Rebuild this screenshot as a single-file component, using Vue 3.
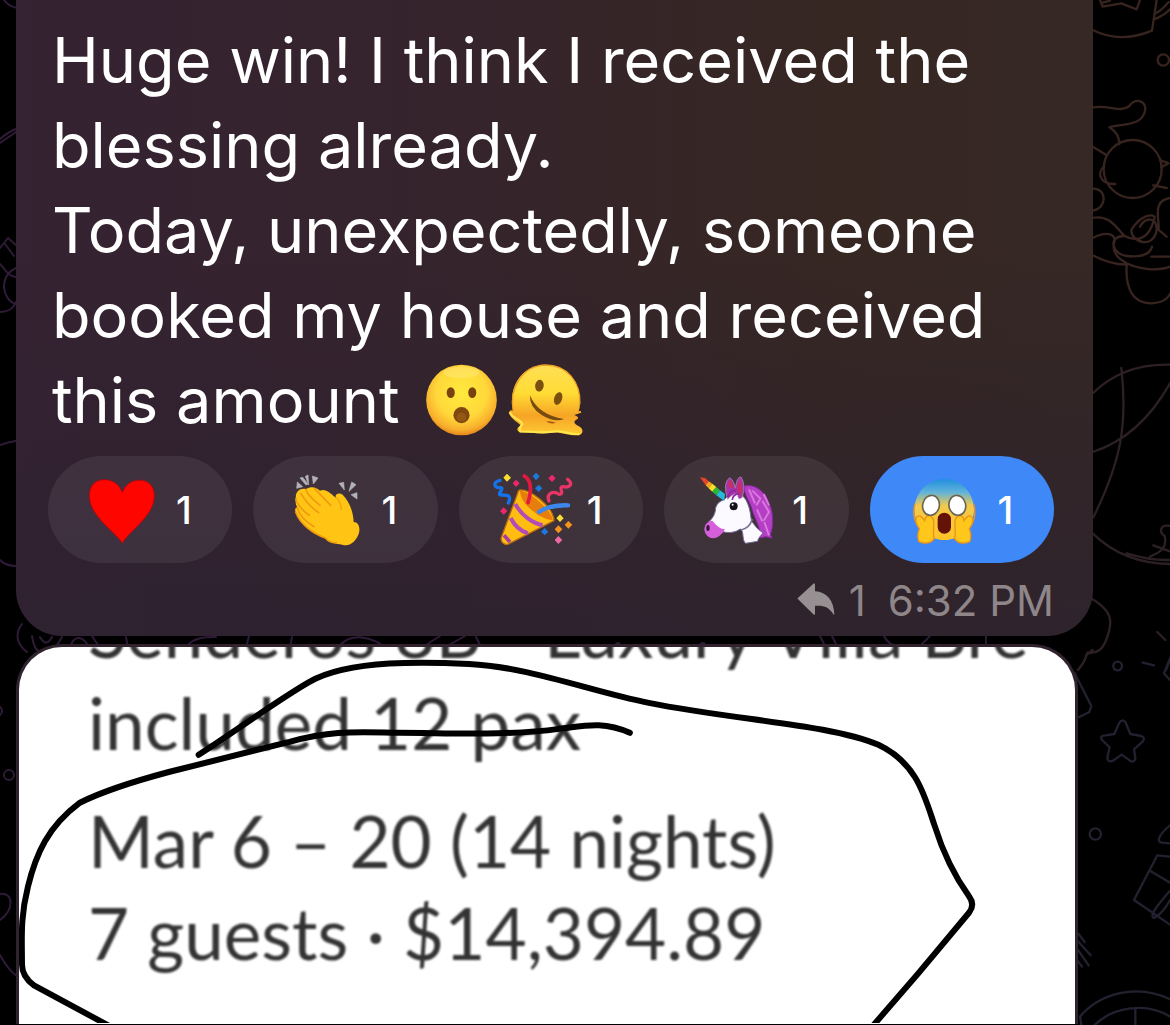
<script setup>
import { ref } from 'vue'

const message = `Huge win! I think I received the blessing already.
Today, unexpectedly, someone booked my house and received this amount `

const reactions = ref([
  { id: 'heart', label: 'Heart', count: 1, viewBox: '125 88 240 240', mine: false },
  { id: 'clap', label: 'Clapping hands', count: 1, viewBox: '743 88 240 240', mine: false },
  { id: 'party', label: 'Party popper', count: 1, viewBox: '159 88 240 240', mine: false },
  { id: 'unicorn', label: 'Unicorn', count: 1, viewBox: '777 88 240 240', mine: false },
  { id: 'scream', label: 'Screaming face', count: 1, viewBox: '372 88 240 240', mine: true }
])

function toggle(reaction) {
  reaction.mine = !reaction.mine
}
</script>

<template>
  <main class="chat">
    <!-- doodle wallpaper -->
    <svg class="wallpaper" viewBox="0 0 1170 1025" preserveAspectRatio="xMidYMid slice" aria-hidden="true">
      <g class="warm" transform="translate(1060 0) scale(.3333)">
        <path d="M120 0L128 20L184 10L230 28L240 0M128 8L150 2M98 90Q180 132 276 92L290 0M282 58Q310 48 330 28M286 40Q300 36 326 6" />
        <circle cx="310" cy="180" r="17" />
        <path d="M98 322C150 314 180 340 208 318C226 292 256 302 256 328C248 380 190 370 148 382Q178 400 178 432" />
        <circle cx="218" cy="507" r="87" />
        <path d="M98 440L138 464M132 500C112 516 116 554 166 552M300 480L326 490L304 502M280 556L320 564M98 566C142 564 142 626 98 632" />
        <path d="M98 654C152 642 176 694 194 708C224 724 268 726 284 650C262 636 230 664 214 690C212 726 280 750 290 690C292 650 256 650 240 680M98 714C140 692 164 702 164 722C150 760 184 800 270 808Q310 808 330 800M194 708C140 708 158 764 200 768C240 772 270 764 276 740M98 766Q150 794 200 794M274 770L330 770M330 594C276 602 298 656 296 690L320 710" />
        <path d="M200 794C196 860 214 910 275 910Q318 908 330 882" />
      </g>
      <g class="dusk" transform="translate(1060 320) scale(.3333)">
        <path d="M98 220Q190 130 330 134M98 396Q240 350 330 190M184 144C204 320 180 430 100 592M98 640Q190 730 330 732M200 700Q270 722 330 720" />
        <path d="M330 618C300 612 296 636 314 648C324 690 290 700 270 710M280 676L330 694M86 830C156 870 164 900 136 966Q120 1004 82 998Q76 1024 54 1050M98 990L78 1006" />
        <path d="M292 936L316 960M330 1020L318 1050" />
      </g>
      <g class="cool" transform="translate(1060 640) scale(.3333)">
        <circle cx="173" cy="78" r="13" />
        <path d="M248 68L282 76M330 55L312 100L330 120M44 100L94 198L88 216L56 232" />
        <path d="M178 248Q188 234 197 248L211 282L244 288Q258 294 247 306L222 328L226 354Q224 370 210 362L185 344L158 363Q142 368 142 352L149 322L126 300Q118 286 136 286L163 282Z" />
        <circle cx="106" cy="582" r="17" />
        <path d="M330 556C304 578 284 604 306 608L330 610M292 646L330 650M292 646L222 780L330 854M270 692L330 728M330 752C300 788 264 828 282 834C300 826 320 800 330 780" />
        <path d="M54 880L74 906M54 904L92 946M54 930L86 976M54 964L66 980M60 1130C120 1060 230 1030 330 1078M60 1130L64 1155M104 1155C160 1100 260 1086 330 1130M226 1104V1155" />
      </g>
      <g class="violet">
        <path d="M4 0Q8 6 17 8M0 143L16 132M0 139Q8 132 16 129M8 238L17 246M8 238L0 248M5 244L14 256M0 264C6 270 8 276 16 277M16 268C-2 276 2 300 16 304M0 312Q12 312 16 302M0 445Q8 442 16 441M0 560Q6 566 16 566" />
        <circle cx="9" cy="775" r="5" />
        <circle cx="-3" cy="711" r="5" />
        <path d="M0 894C14 892 14 910 0 920M0 955Q8 970 17 976" />
        <path d="M22 624C13 636 19 646 27 652M32 636Q34 650 40 652M40 637Q46 648 52 637M62 637L54 650M70 650C72 632 86 636 90 650M92 636L100 648M126 637L128 648M186 647Q194 636 216 637M249 636L246 648M292 637L290 648M338 648C350 630 374 638 386 648M418 650L440 636M440 650L465 636M476 637L482 649M614 648Q618 638 622 648M664 648Q668 642 674 648M698 648Q702 638 708 648M820 636L826 648M832 636L838 648M884 636Q890 648 908 648M918 648L930 636M986 636V648" />
      </g>
    </svg>

    <article class="bubble">
      <p class="message">{{ message }}<svg class="emoji-inline face" viewBox="80 40 216 220" role="img" aria-label="Face with open mouth">
          <defs>
            <radialGradient id="face-fill" cx=".5" cy=".4" r=".6">
              <stop offset="0" stop-color="#ffea3d" />
              <stop offset=".6" stop-color="#ffd83a" />
              <stop offset=".88" stop-color="#f8ae2c" />
              <stop offset="1" stop-color="#e3861a" />
            </radialGradient>
          </defs>
          <circle cx="188" cy="150" r="105" fill="url(#face-fill)" />
          <ellipse cx="188" cy="68" rx="54" ry="17" fill="#ffee86" opacity=".4" />
          <ellipse cx="156" cy="128" rx="12" ry="16" fill="#79430f" />
          <ellipse cx="220" cy="128" rx="12" ry="16" fill="#79430f" />
          <circle cx="188" cy="195" r="24" fill="#80480f" />
          <ellipse cx="188" cy="201" rx="14" ry="13" fill="#955714" />
        </svg><svg class="emoji-inline melting" viewBox="330 40 228 225" role="img" aria-label="Melting face">
          <defs>
            <linearGradient id="melt-fill" x1="0" y1="0" x2="0" y2="1">
              <stop offset="0" stop-color="#ffdf55" />
              <stop offset=".4" stop-color="#ffdc34" />
              <stop offset=".72" stop-color="#f6a425" />
              <stop offset="1" stop-color="#ffcd35" />
            </linearGradient>
          </defs>
          <path d="M344 185C328 106 376 46 443 46C508 46 550 98 547 165Q547 180 543 187Q552 184 551 191L530 198Q546 204 540 210C524 216 530 226 544 232C562 240 556 262 538 260C508 260 486 248 462 252C430 258 390 250 366 251C350 246 358 232 368 230C360 222 328 204 333 187Q337 181 344 185Z" fill="url(#melt-fill)" />
          <path d="M344 185C332 118 370 48 443 46C509 46 550 99 547 165" fill="none" stroke="#ef9f23" stroke-width="4" />
          <path d="M333 190C346 214 366 208 372 226Q362 238 366 248C410 248 440 254 470 248C498 244 520 259 545 256" fill="none" stroke="#ffe84d" stroke-width="6" />
          <ellipse cx="424" cy="109" rx="13" ry="18" transform="rotate(8 424 109)" fill="#79500f" />
          <ellipse cx="481" cy="148" rx="12" ry="20" transform="rotate(18 481 148)" fill="#79500f" />
          <path d="M395 138Q420 198 499 210Q470 222 431 198Q394 176 395 138Z" fill="#774b10" />
          <path d="M444 218Q460 215 474 222Q460 227 444 218Z" fill="#a4580d" />
        </svg>
      </p>

      <div class="reactions">
        <button
          v-for="reaction in reactions"
          :key="reaction.id"
          type="button"
          class="reaction"
          :class="{ mine: reaction.mine }"
          :aria-label="`${reaction.label} ${reaction.count}`"
          :aria-pressed="reaction.mine"
          @click="toggle(reaction)"
        >
          <svg class="reaction-icon" :viewBox="reaction.viewBox" aria-hidden="true">
            <path v-if="reaction.id === 'heart'" d="M246 308C234 284 166 238 151 190C138 142 160 118 190 117C218 116 238 132 246 155C256 130 276 116 304 119C336 122 350 154 338 191C322 240 258 280 246 308Z" fill="#ff0500" stroke="#a60b12" stroke-width="3" />

            <g v-else-if="reaction.id === 'clap'">
              <path d="M798 107L806 103L808 133ZM782 112L790 110L806 130L800 133ZM819 106L836 112L822 130ZM774 124L790 138L772 143ZM899 128L913 125L915 148ZM937 124L950 132L929 152ZM935 162L953 156V175Z" fill="#b3b2b8" stroke="#b3b2b8" stroke-width="2" />
              <path d="M770 174C766 154 782 140 800 145C814 136 830 138 842 150C856 144 868 152 890 172C884 160 900 154 910 162C930 182 942 214 943 244C958 244 964 262 958 280C950 302 930 320 909 312C888 308 874 310 856 292C820 278 780 250 769 214Q764 202 774 200Q766 188 770 174Z" fill="#ffc414" />
              <path d="M770 174C768 186 796 216 810 224M774 202C780 222 800 244 824 258M800 148C806 166 826 180 842 194M784 158C798 180 820 204 838 216M826 144L874 194M769 214C782 250 820 278 858 292Q872 308 892 306" fill="none" stroke="#f09a10" stroke-width="5" stroke-linecap="round" />
              <path d="M892 170Q906 188 906 208" fill="none" stroke="#f0a20c" stroke-width="4" />
            </g>

            <g v-else-if="reaction.id === 'party'" fill="none" stroke-linecap="round">
              <path d="M236 149C264 138 340 198 342 240L202 312Q184 312 183 293L227 174Z" fill="#ffbd12" stroke="#b96b10" stroke-width="4" />
              <path d="M240 150C266 150 336 208 338 238C310 240 240 194 240 150Z" fill="#e77d0c" />
              <path d="M226 190C244 224 278 248 308 254M212 232Q230 268 264 278" stroke="#b34bb8" stroke-width="12" stroke-linecap="butt" />
              <path d="M192 284L210 304" stroke="#a73f9f" stroke-width="11" stroke-linecap="butt" />
              <path d="M180 119C158 124 162 142 178 141C200 140 166 162 184 163C208 162 214 168 205 187" stroke="#1672e8" stroke-width="10" />
              <path d="M253 106C278 122 274 154 264 186" stroke="#e5193f" stroke-width="11" />
              <path d="M383 116C404 132 384 142 370 138C352 136 376 162 358 161C338 148 318 160 327 181" stroke="#e83566" stroke-width="10" />
              <path d="M297 214Q330 192 384 194" stroke="#3d87ec" stroke-width="13" />
              <g stroke="none">
                <path d="M201 99L213 111L201 123L190 111ZM360 221L371 233L360 244L349 233Z" fill="#f6df32" />
                <path d="M228 117L239 128L228 139L218 128ZM336 102L347 113L336 124L325 113ZM191 200L202 211L191 222L180 211Z" fill="#ec286b" />
                <path d="M288 96L299 107L288 119L278 107ZM296 132L307 143L296 154L285 143ZM314 262L325 273L314 284L303 273Z" fill="#1d78dc" />
                <path d="M385 241L397 252L385 264L374 252ZM355 254L367 266L355 278L344 266Z" fill="#f4921c" />
                <path d="M355 286L367 298L355 310L344 298Z" fill="#ec69a3" />
              </g>
            </g>

            <g v-else-if="reaction.id === 'unicorn'">
              <path d="M916 136C950 128 982 158 990 188C1006 218 1002 264 994 282L1000 292L980 288L962 292C970 266 944 230 938 202C930 178 914 162 916 136Z" fill="#b43fc4" stroke="#8924a5" stroke-width="3" />
              <path d="M940 150L964 174L952 194M970 180L990 214L974 240M954 206L970 242M930 146L948 188M974 160L990 194M976 244L990 284" fill="none" stroke="#d978df" stroke-width="6" />
              <path d="M856 177C876 150 908 154 922 180C936 208 934 228 938 242Q952 264 972 277Q956 294 956 302L920 308C908 300 916 270 904 265Q880 282 846 272Q818 294 802 280Q790 262 807 246Q830 226 830 201Q836 182 856 177Z" fill="#fcfaff" stroke="#766d96" stroke-width="3" />
              <path d="M799 252Q810 240 820 240Q838 264 858 266Q842 294 820 293Q792 286 799 252Z" fill="#d65edb" />
              <ellipse cx="807" cy="262" rx="5" ry="9" fill="#38133e" />
              <path d="M866 176Q850 126 872 111Q884 118 889 141Q894 108 906 109Q921 132 910 170Q896 182 896 160Q884 156 866 176Z" fill="#a734a9" stroke="#a99bb5" stroke-width="2" />
              <path d="M869 138Q866 122 874 118Q884 128 883 144M897 156Q892 130 903 119Q915 144 904 166Z" fill="#c52f64" />
              <path d="M866 170Q874 146 892 150M880 178Q880 162 902 158" stroke="#8c26a1" stroke-width="5" fill="none" />
              <path d="M783 110L798 112L809 122L800 134Z" fill="#e6452c" />
              <path d="M809 122L820 129L809 143L800 134Z" fill="#f4a31e" />
              <path d="M820 129L832 139L820 153L809 143Z" fill="#f5df29" />
              <path d="M832 139L843 149L832 164L820 153Z" fill="#29b939" />
              <path d="M843 149L858 160L856 181L832 164Z" fill="#26b9dc" />
              <circle cx="884" cy="197" r="12" fill="#14131a" />
              <circle cx="881" cy="192" r="3" fill="#fff" />
              <path d="M940 235Q932 262 906 268" fill="none" stroke="#777298" stroke-width="5" />
            </g>

            <g v-else>
              <defs>
                <linearGradient id="scream-fill" x1="0" y1="0" x2="0" y2="1">
                  <stop offset="0" stop-color="#218fe0" />
                  <stop offset=".22" stop-color="#62b3d8" />
                  <stop offset=".44" stop-color="#f3c94c" />
                  <stop offset="1" stop-color="#ffc425" />
                </linearGradient>
              </defs>
              <path d="M493 115C546 115 580 158 582 206C583 246 548 298 493 298C438 298 402 248 403 206C405 158 440 115 493 115Z" fill="url(#scream-fill)" />
              <path d="M405 190C396 222 406 248 416 258" fill="none" stroke="#ee9223" stroke-width="4" />
              <path d="M581 190C590 222 580 248 570 258" fill="none" stroke="#ee9223" stroke-width="4" />
              <path d="M408 232C416 220 426 226 434 240C438 220 452 222 459 234C466 250 456 266 462 294C454 310 426 310 416 302Q410 284 418 264Q406 248 408 232ZM578 232C570 220 560 226 552 240C548 220 534 222 527 234C520 250 530 266 524 294C532 310 560 310 570 302Q576 284 568 264Q580 248 578 232Z" fill="#ffc61c" stroke="#e99319" stroke-width="4" />
              <g fill="#fff" stroke="#6a6552" stroke-width="5">
                <ellipse cx="453" cy="194" rx="25" ry="30" transform="rotate(12 453 194)" />
                <ellipse cx="532" cy="194" rx="25" ry="30" transform="rotate(-12 532 194)" />
              </g>
              <rect x="473" y="216" width="40" height="63" rx="20" fill="#651208" />
            </g>
          </svg>
          <span class="count">{{ reaction.count }}</span>
        </button>
      </div>

      <footer class="meta">
        <svg class="reply-icon" viewBox="50 422 114 98" aria-hidden="true">
          <path d="M51 468L100 423Q104 421 104 427V446C140 448 160 474 162 514Q162 520 158 514C146 494 130 488 104 490V513Q104 519 99 515Z" />
        </svg>
        <span class="replies">1</span>
        <time datetime="18:32">6:32 PM</time>
      </footer>
    </article>

    <figure class="photo">
      <div class="listing">
        <p>Senderos 8B - Luxury Villa Bre</p>
        <p>included 12 pax</p>
      </div>
      <div class="booking">
        <p>Mar 6 – 20 (14 nights)</p>
        <p>7 guests · $14,394.89</p>
      </div>
      <!-- hand-drawn loop around the booking -->
      <svg class="scribble" viewBox="19 648 1058 377" preserveAspectRatio="xMinYMin meet" aria-hidden="true">
        <path d="M199 756C235 733 280 700 310 683C350 660 430 663 470 665C530 668 590 692 650 704C740 722 830 725 880 746C918 764 926 796 936 826C946 858 958 880 971 898Q977 906 971 914L920 975L875 1027" />
        <path d="M631 734C604 722 586 727 560 730C510 737 450 734 400 734C350 733 330 732 290 743L170 773C140 781 106 791 80 804C48 828 36 855 28 888C20 920 22 940 22 966Q22 978 34 987L110 1028" />
      </svg>
    </figure>
  </main>
</template>

<style>
body {
  margin: 0;
  background: #000;
}
</style>

<style scoped>
.chat {
  position: relative;
  display: flex;
  flex-direction: column;
  gap: 8px;
  box-sizing: border-box;
  height: 100vh;
  padding-bottom: 1px;
  overflow: hidden;
  background: #000;
  font-family: Inter, "Liberation Sans", sans-serif;
}

.wallpaper {
  position: absolute;
  inset: 0;
  width: 100%;
  height: 100%;
  fill: none;
  stroke-width: 2;
  stroke-linecap: round;
  stroke-linejoin: round;
}

.warm {
  stroke: #38241f;
  stroke-width: 7;
}

.dusk {
  stroke: #2c2025;
  stroke-width: 7;
}

.cool {
  stroke: #232030;
  stroke-width: 7;
}

.violet {
  stroke: #2f1b38;
}

.bubble {
  position: relative;
  margin: 0 77px 0 16px;
  padding: 18px 39px 10px 32px;
  border-radius: 0 0 46px 46px;
  background:
    linear-gradient(180deg, transparent 40%, rgba(44, 33, 48, 0.75) 100%),
    linear-gradient(90deg, #352232 0%, #35242c 40%, #362723 75%, #362824 100%);
}

.message {
  margin: 0 0 13px;
  padding-left: 4px;
  color: #fff;
  font-size: 63px;
  line-height: 85px;
  white-space: pre-line;
}

.emoji-inline {
  display: inline-block;
  height: 74px;
  vertical-align: -14px;
}

.face {
  width: 73px;
  margin: 0 10px 0 8px;
}

.melting {
  width: 76px;
}

.reactions {
  display: grid;
  grid-template-columns: repeat(5, 1fr);
  gap: 21px;
}

.reaction {
  display: flex;
  align-items: center;
  gap: 14px;
  height: 107px;
  padding: 0 0 0 34px;
  border: 0;
  border-radius: 54px;
  background: rgba(255, 255, 255, 0.07);
  color: #fff;
  font-family: inherit;
  font-size: 38px;
  font-weight: 500;
  cursor: pointer;
}

.reaction.mine {
  background: #3f88f7;
}

.reaction-icon {
  flex: none;
  width: 80px;
  height: 80px;
}

.meta {
  display: flex;
  align-items: center;
  justify-content: flex-end;
  margin-top: 13px;
  color: #8e8688;
  font-size: 42px;
  line-height: 50px;
}

.reply-icon {
  width: 38px;
  height: 33px;
  margin: 0 14px 4px 0;
  fill: #979092;
}

.replies {
  margin-right: 22px;
}

.photo {
  position: relative;
  flex: 1;
  min-height: 0;
  margin: 0 92px 0 16px;
  padding: 0 0 0 69px;
  overflow: hidden;
  border: 3px solid #30232e;
  border-bottom: 0;
  border-radius: 46px 46px 0 0;
  background: #fff;
  color: #333;
  font-family: Lato, "Liberation Sans", sans-serif;
  font-size: 71px;
  line-height: 92px;
  white-space: nowrap;
}

.photo p {
  margin: 0;
}

/* enlarged low-resolution photo text */
.listing,
.booking {
  filter: blur(1px);
}

.listing {
  margin-top: -62px;
}

.booking {
  margin-top: 26px;
}

.scribble {
  position: absolute;
  top: 0;
  left: 0;
  width: 100%;
  fill: none;
  stroke: #000;
  stroke-width: 6;
  stroke-linecap: round;
  stroke-linejoin: round;
}
</style>
